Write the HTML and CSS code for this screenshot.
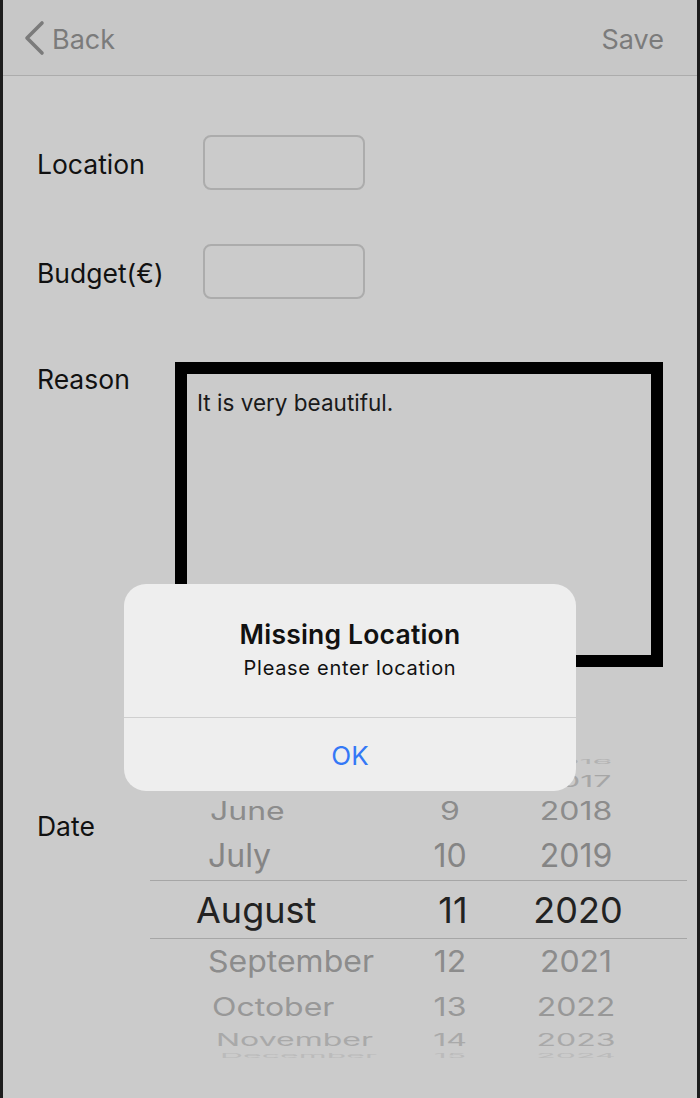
FILE: index.html
```html
<!DOCTYPE html>
<html>
<head>
<meta charset="utf-8">
<link rel="stylesheet" href="styles.css">
</head>
<body>
<div class="screen">
  <header class="nav">
    <div class="nav-back">
      <svg class="chev" width="24" height="36" viewBox="0 0 24 36"><path d="M19 3 L4 18 L19 33" fill="none" stroke="#7b7b7b" stroke-width="3.6" stroke-linecap="round" stroke-linejoin="round"/></svg>
      <span>Back</span>
    </div>
    <div class="nav-save">Save</div>
  </header>
  <main class="form">
    <div class="row row-location">
      <label class="lbl lbl-loc">Location</label>
      <div class="input"></div>
    </div>
    <div class="row row-budget">
      <label class="lbl lbl-loc">Budget(€)</label>
      <div class="input"></div>
    </div>
    <div class="row row-reason">
      <label class="lbl lbl-reason">Reason</label>
      <div class="textbox">It is very beautiful.</div>
    </div>
    <div class="row row-date">
      <label class="lbl lbl-date">Date</label>
      <div class="picker">
        <div class="prow r-2016"><span class="m"></span><span class="d"></span><span class="y">2016</span></div>
        <div class="prow r-2017"><span class="m">May</span><span class="d">8</span><span class="y">2017</span></div>
        <div class="prow r-june"><span class="m">June</span><span class="d">9</span><span class="y">2018</span></div>
        <div class="prow r-july"><span class="m">July</span><span class="d">10</span><span class="y">2019</span></div>
        <div class="prow r-sel"><span class="m">August</span><span class="d">11</span><span class="y">2020</span></div>
        <div class="prow r-sep"><span class="m">September</span><span class="d">12</span><span class="y">2021</span></div>
        <div class="prow r-oct"><span class="m">October</span><span class="d">13</span><span class="y">2022</span></div>
        <div class="prow r-nov"><span class="m">November</span><span class="d">14</span><span class="y">2023</span></div>
        <div class="prow r-dec"><span class="m">December</span><span class="d">15</span><span class="y">2024</span></div>
      </div>
    </div>
  </main>
  <div class="alert">
    <div class="alert-body">
      <div class="alert-title">Missing Location</div>
      <div class="alert-msg">Please enter location</div>
    </div>
    <div class="alert-btn">OK</div>
  </div>
</div>
</body>
</html>
```

FILE: styles.css
```css
html, body {
  margin: 0;
  padding: 0;
  background: #1d1d1d;
}
body {
  font-family: Inter, "Noto Sans", "Liberation Sans", sans-serif;
}
.screen {
  position: relative;
  margin: 0 3px;
  width: 694px;
  height: 1098px;
  background: #cbcbcb;
  overflow: hidden;
}
.nav {
  height: 75px;
  background: #c7c7c7;
  border-bottom: 1px solid #acacac;
  display: flex;
  align-items: center;
  justify-content: space-between;
  color: #7b7b7b;
  font-size: 27px;
}
.nav-back {
  display: flex;
  align-items: center;
  padding-left: 20px;
  gap: 5px;
  margin-top: 3px;
}
.nav-back span { margin-top: 1px; }
.chev { display: block; margin-top: -2px; }
.nav-save {
  padding-right: 33px;
  margin-top: 4px;
}
.form {
  padding-left: 34px;
}
.row {
  display: flex;
}
.lbl {
  font-size: 26.5px;
  color: #111;
  line-height: 30px;
}
.row-location { margin-top: 59px; align-items: center; }
.row-budget { margin-top: 54px; align-items: center; }
.lbl-loc { width: 166px; margin-top: 3px; }
.input {
  box-sizing: border-box;
  width: 162px;
  height: 55px;
  border: 2px solid #acacac;
  border-radius: 8px;
}
.row-reason { margin-top: 63px; align-items: flex-start; }
.lbl-reason { width: 138px; margin-top: 2px; }
.textbox {
  box-sizing: border-box;
  width: 488px;
  height: 305px;
  border: 12px solid #000;
  padding: 16px 10px;
  font-size: 22.5px;
  color: #1a1a1a;
  line-height: 26px;
}
.row-date { margin-top: 87px; align-items: flex-start; }
.lbl-date { width: 113px; margin-top: 57px; }
.picker {
  width: 537px;
}
.prow {
  display: flex;
  align-items: center;
  white-space: nowrap;
  overflow: hidden;
  font-size: 32px;
  line-height: 38px;
}
.prow span { display: block; flex: none; box-sizing: border-box; }
.prow .m { width: 248px; padding-left: 58px; }
.prow .d { width: 104px; text-align: center; }
.prow .y { width: 148px; text-align: center; }
.r-2016 { height: 16px; color: #b2b2b2; }
.r-2016 span { transform: scaleY(0.2); }
.r-2017 { height: 22px; color: #a6a6a6; }
.r-2017 span { transform: scaleY(0.5); }
.r-june { height: 38px; color: #8c8c8c; }
.r-june span { transform: scaleY(0.78); }
.r-june .m { padding-left: 60px; }
.r-july { height: 50px; color: #858585; }
.r-july span { margin-top: 2px; }
.r-sel {
  box-sizing: border-box;
  height: 59px;
  font-size: 36px;
  color: #222;
  border-top: 1px solid #a6a6a6;
  border-bottom: 1px solid #a6a6a6;
}
.r-sel .m { padding-left: 46px; }
.r-sel .d { padding-left: 6px; }
.r-sel .y { padding-left: 4px; }
.r-sep { height: 46px; color: #8c8c8c; }
.r-sep span { transform: scaleY(0.93); }
.r-oct { height: 44px; color: #989898; }
.r-oct span { transform: scaleY(0.8); }
.r-oct .m { padding-left: 62px; }
.r-nov { height: 22px; color: #a9a9a9; }
.r-nov span { transform: scaleY(0.52); }
.r-nov .m { padding-left: 66px; }
.r-dec { height: 10px; color: #bbb; }
.r-dec span { transform: scaleY(0.18); }
.r-dec .m { padding-left: 70px; }

.alert {
  position: absolute;
  left: 121px;
  top: 584px;
  width: 452px;
  height: 207px;
  border-radius: 22px;
  background: #eeeeee;
  display: flex;
  flex-direction: column;
  text-align: center;
}
.alert-body {
  padding-top: 33px;
  height: 100px;
  border-bottom: 1px solid #cfcfcf;
}
.alert-title {
  font-size: 26.5px;
  font-weight: 600;
  color: #111;
  line-height: 34px;
  letter-spacing: 0.2px;
}
.alert-msg {
  margin-top: 4px;
  font-size: 20px;
  color: #111;
  line-height: 26px;
  letter-spacing: 0.7px;
}
.alert-btn {
  flex: 1;
  display: flex;
  align-items: center;
  justify-content: center;
  font-size: 26px;
  color: #3478f6;
  padding-top: 2px;
}
```
